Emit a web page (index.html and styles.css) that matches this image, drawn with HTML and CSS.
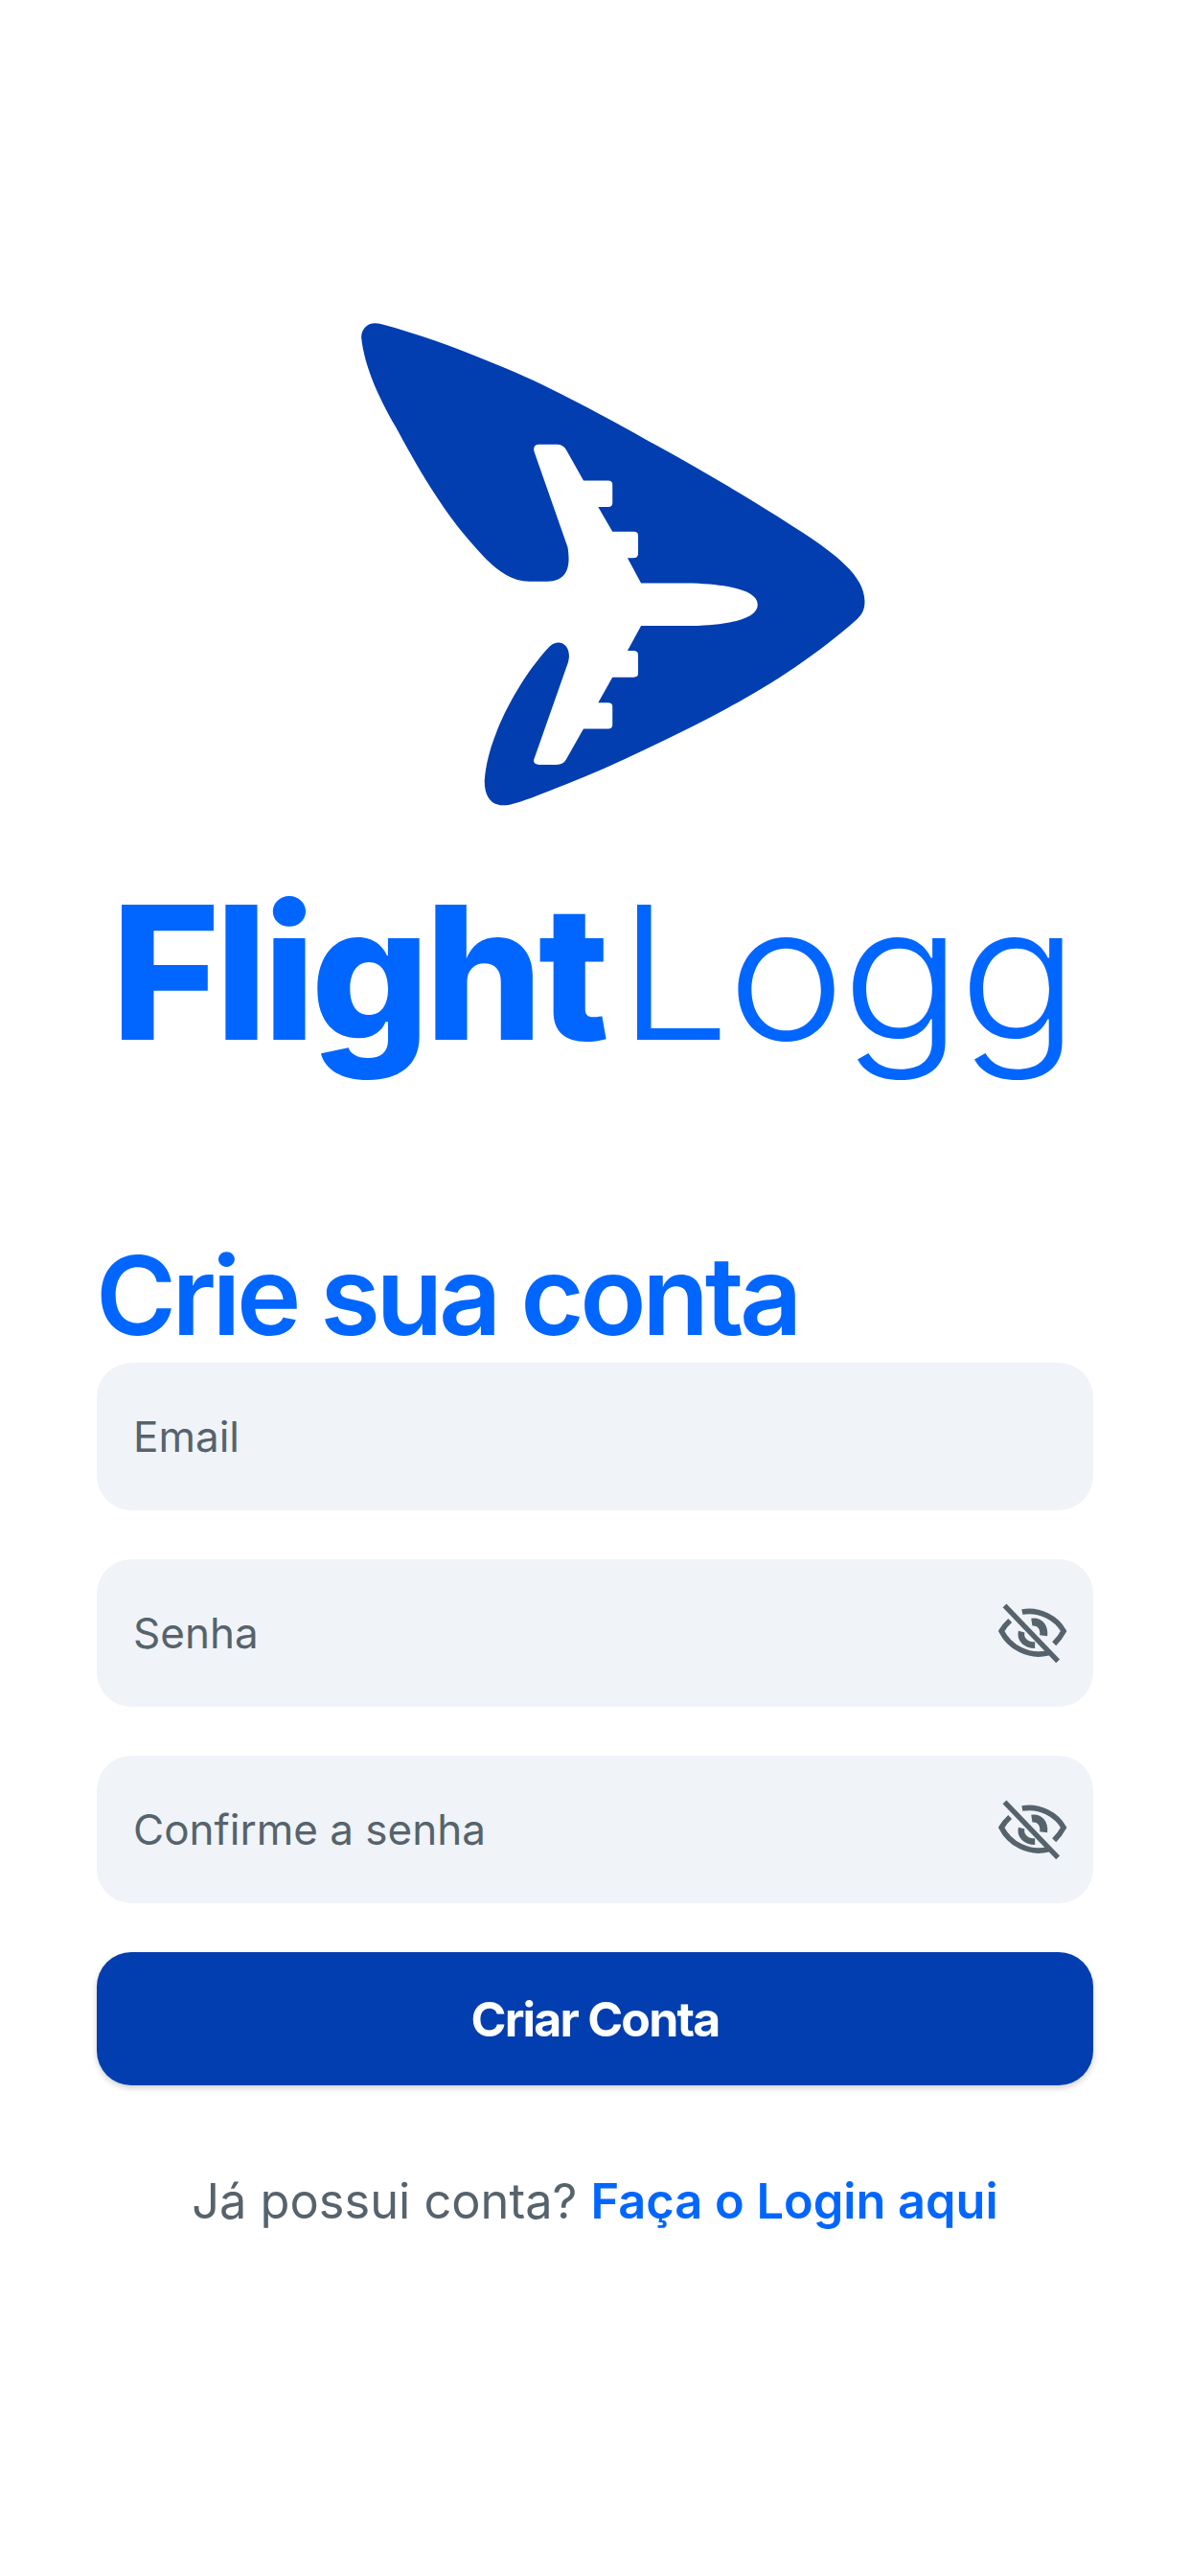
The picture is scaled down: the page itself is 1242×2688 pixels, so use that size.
FILE: index.html
```html
<!DOCTYPE html>
<html lang="en">
<head>
    <meta charset="UTF-8">
    <meta name="viewport" content="width=device-width, initial-scale=1.0">
    <title>FlightLogg</title>
    <link rel="stylesheet" href="styles.css">
</head>
<body>
    <main class="page">
        <svg class="logo" viewBox="0 0 1568 1568" preserveAspectRatio="none">
            <path fill="#023eb0" d="M150 80 C280 118 400 170 520 225 C640 282 800 378 900 440 C1050 530 1200 628 1300 700 C1390 765 1470 830 1470 905 C1470 930 1462 945 1450 957 C1350 1055 1220 1150 1100 1220 C1000 1280 880 1342 760 1402 C690 1435 620 1465 560 1490 C520 1505 500 1512 485 1512 C450 1512 433 1485 433 1440 C440 1300 540 1120 610 1040 C640 1010 675 1040 660 1090 L568 1375 C565 1385 572 1391 582 1391 L630 1391 Q648 1391 656 1375 L703 1284 L770 1284 Q782 1284 782 1272 L782 1218 Q782 1207 770 1207 L743 1207 L782 1131 L840 1131 Q852 1131 852 1120 L852 1064 Q852 1052 838 1052 L823 1052 L860 978 L1000 978 C1110 974 1178 955 1178 915 C1178 875 1110 856 1000 851 L860 851 L823 776 L838 776 Q852 776 852 764 L852 710 Q852 698 840 698 L782 698 L743 624 L770 624 Q782 624 782 612 L782 558 Q782 546 770 546 L703 546 L656 455 Q648 438 630 438 L582 438 Q565 438 568 458 L660 745 C668 800 660 845 605 846 L555 846 C490 846 440 785 400 735 C360 685 330 640 300 590 C260 525 220 445 190 385 C150 310 105 210 97 120 C97 90 120 70 150 80 Z"/>
        </svg>

        <div class="wordmark"><span class="wordmark-bold">Flight</span><span class="wordmark-light">Logg</span></div>

        <h1 class="title">Crie sua conta</h1>

        <div class="field"><span class="placeholder">Email</span></div>
        <div class="field">
            <span class="placeholder">Senha</span>
            <svg class="eye" viewBox="60 100 230 195">
                <use href="#eye-off"/>
            </svg>
        </div>
        <div class="field">
            <span class="placeholder">Confirme a senha</span>
            <svg class="eye" viewBox="60 100 230 195">
                <use href="#eye-off"/>
            </svg>
        </div>

        <button class="submit">Criar Conta</button>

        <p class="login">Já possui conta? <a class="login-link" href="#">Faça o Login aqui</a></p>
    </main>

    <svg class="defs" width="0" height="0">
        <g id="eye-off" fill="none" stroke="#56636c" stroke-width="17">
            <path d="M85 110 L252 284" stroke-width="16"/>
            <path d="M140 130 C195 120 248 150 270 190 C262 205 252 218 240 230"/>
            <path d="M102 157 C92 166 82 178 75 190 C100 240 160 274 222 258"/>
            <path d="M170 162 C195 158 210 178 207 204" stroke-width="24"/>
            <path d="M138 192 C132 215 152 234 180 234" stroke-width="20"/>
        </g>
    </svg>
</body>
</html>
```

FILE: styles.css
```css
body {
    margin: 0;
    background: #fff;
    font-family: Inter, "Liberation Sans", sans-serif;
}
.page {
    display: flex;
    flex-direction: column;
    padding: 310px 101px 0 101px;
}
.logo {
    width: 600px;
    height: 550px;
    margin-left: 239px;
}
.wordmark {
    display: flex;
    margin: 35px 0 0 15px;
    height: 240px;
    font-size: 194px;
    line-height: 240px;
    color: #0066ff;
    white-space: nowrap;
}
.wordmark-bold {
    font-weight: 800;
    letter-spacing: -5px;
}
.wordmark-light {
    font-weight: 360;
    margin-left: 14px;
    letter-spacing: -3px;
    transform: scaleX(1.07);
    transform-origin: left;
}
.title {
    margin: 154px 0 0 -1px;
    font-size: 114px;
    line-height: 126px;
    font-weight: 620;
    letter-spacing: -4.4px;
    color: #0066ff;
}
.field {
    display: flex;
    align-items: center;
    justify-content: space-between;
    height: 154px;
    margin-top: 51px;
    padding: 0 24px 0 38px;
    border-radius: 36px;
    background: #f0f4f9;
}
.title + .field {
    margin-top: 7px;
}
.placeholder {
    font-size: 44px;
    color: #56636c;
}
.eye {
    width: 77px;
    height: 65px;
}
.defs {
    position: absolute;
}
.submit {
    height: 139px;
    margin-top: 51px;
    border: none;
    border-radius: 36px;
    background: #023eb0;
    color: #fff;
    font-family: inherit;
    font-size: 50px;
    font-weight: 650;
    letter-spacing: -1.8px;
    box-shadow: 0 3px 6px rgba(0, 0, 0, 0.18);
}
.login {
    margin: 90px 0 0;
    text-align: center;
    font-size: 50.5px;
    line-height: 62px;
    color: #56636c;
}
.login-link {
    color: #0066ff;
    font-weight: 600;
    text-decoration: none;
}
```
